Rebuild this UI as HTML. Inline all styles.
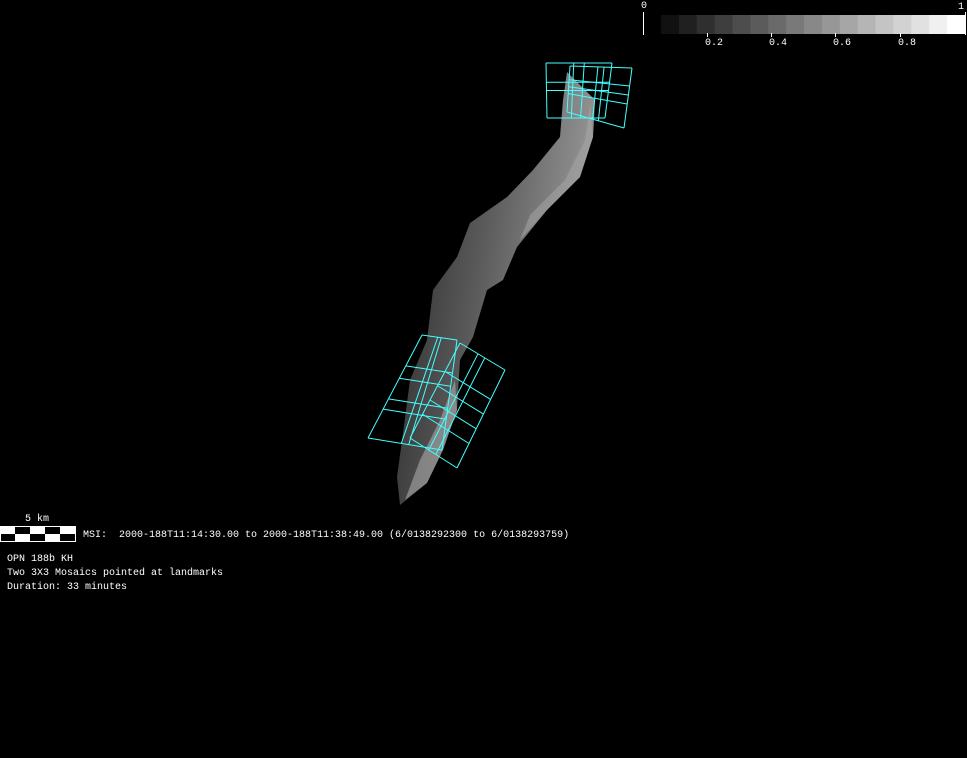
<!DOCTYPE html>
<html><head><style>
html,body{margin:0;padding:0;background:#000;}
body{width:967px;height:758px;overflow:hidden;position:relative;font-family:"Liberation Mono",monospace;font-size:10px;color:#fff;}
.t{position:absolute;white-space:pre;line-height:12px;}
</style></head><body>
<svg width="967" height="758" style="position:absolute;left:0;top:0">
<defs>
<linearGradient id="g" x1="0" y1="0" x2="1" y2="0.3">
<stop offset="0" stop-color="#222"/><stop offset="0.5" stop-color="#5a5a5a"/><stop offset="1" stop-color="#999"/>
</linearGradient>
</defs>
<polygon fill="url(#g)" points="567,72 595,100 593,137 580,177 547,210 517,247 503,280 487,290 473,337 460,360 457,410 443,450 427,483 400,505 397,477 403,433 410,380 427,340 433,290 457,257 470,223 507,197 533,170 560,137 563,100"/>
<polygon fill="#aaa" opacity="0.5" points="590,105 593,137 580,177 547,210 520,240 530,215 565,180 585,140"/>
<polygon fill="#bbb" opacity="0.5" points="455,380 457,410 443,450 427,483 405,500 420,460 440,420"/>
<g id="bar"></g>
<g id="grids" stroke="#4ff" stroke-width="1" fill="none"></g>
<line x1="643.5" y1="12" x2="643.5" y2="35" stroke="#fff"/>
<line x1="965.5" y1="12" x2="965.5" y2="35" stroke="#fff"/>
<g stroke="#fff"><line x1="707.5" y1="33" x2="707.5" y2="37"/><line x1="771.5" y1="33" x2="771.5" y2="37"/><line x1="835.5" y1="33" x2="835.5" y2="37"/><line x1="900.5" y1="33" x2="900.5" y2="37"/></g>
<rect x="0.5" y="526.5" width="75" height="15" fill="#000" stroke="#fff"/>
<g fill="#fff"><rect x="0" y="526" width="15" height="8"/><rect x="30" y="526" width="15" height="8"/><rect x="60" y="526" width="15" height="8"/><rect x="15" y="534" width="15" height="7"/><rect x="45" y="534" width="15" height="7"/></g>
</svg>
<div class="t" style="left:641px;top:1px">0</div>
<div class="t" style="left:958px;top:2px">1</div>
<div class="t" style="left:705px;top:38px">0.2</div>
<div class="t" style="left:769px;top:38px">0.4</div>
<div class="t" style="left:833px;top:38px">0.6</div>
<div class="t" style="left:898px;top:38px">0.8</div>
<div class="t" style="left:25px;top:514px">5 km</div>
<div class="t" style="left:83px;top:530px">MSI:  2000-188T11:14:30.00 to 2000-188T11:38:49.00 (6/0138292300 to 6/0138293759)</div>
<div class="t" style="left:7px;top:554px">OPN 188b KH</div>
<div class="t" style="left:7px;top:568px">Two 3X3 Mosaics pointed at landmarks</div>
<div class="t" style="left:7px;top:582px">Duration: 33 minutes</div>
<script>
var ns="http://www.w3.org/2000/svg";
var bar=document.getElementById("bar");
for(var i=0;i<17;i++){var r=document.createElementNS(ns,"rect");var x0=661+i*304/17;r.setAttribute("x",x0);r.setAttribute("y",15);r.setAttribute("width",304/17+0.5);r.setAttribute("height",19);var v=Math.round(17+i*(238/16));r.setAttribute("fill","rgb("+v+","+v+","+v+")");bar.appendChild(r);}
var G=document.getElementById("grids");
function L(a,b){var l=document.createElementNS(ns,"line");l.setAttribute("x1",a[0]);l.setAttribute("y1",a[1]);l.setAttribute("x2",b[0]);l.setAttribute("y2",b[1]);G.appendChild(l);}
function P(c,u,v){var t=[c[0][0]+(c[1][0]-c[0][0])*u,c[0][1]+(c[1][1]-c[0][1])*u],b=[c[3][0]+(c[2][0]-c[3][0])*u,c[3][1]+(c[2][1]-c[3][1])*u];return[t[0]+(b[0]-t[0])*v,t[1]+(b[1]-t[1])*v];}
function grid(c,us,vs){us.forEach(function(u){L(P(c,u,0),P(c,u,1));});vs.forEach(function(v){L(P(c,0,v),P(c,1,v));});}
grid([[546,63],[612,63],[605,118],[547,118]],[0,0.42,0.58,1],[0,0.35,0.5,1]);
grid([[570,66],[632,68],[624,128],[567,112]],[0,0.45,0.55,1],[0,0.3,0.45,0.6,1]);
grid([[422,335],[457,340],[442,450],[368,438]],[0,0.45,0.55,1],[0,0.3,0.42,0.62,0.72,1]);
grid([[460,343],[505,370],[457,468],[410,438]],[0,0.4,0.55,1],[0,0.3,0.45,0.6,0.75,1]);
</script>
</body></html>
